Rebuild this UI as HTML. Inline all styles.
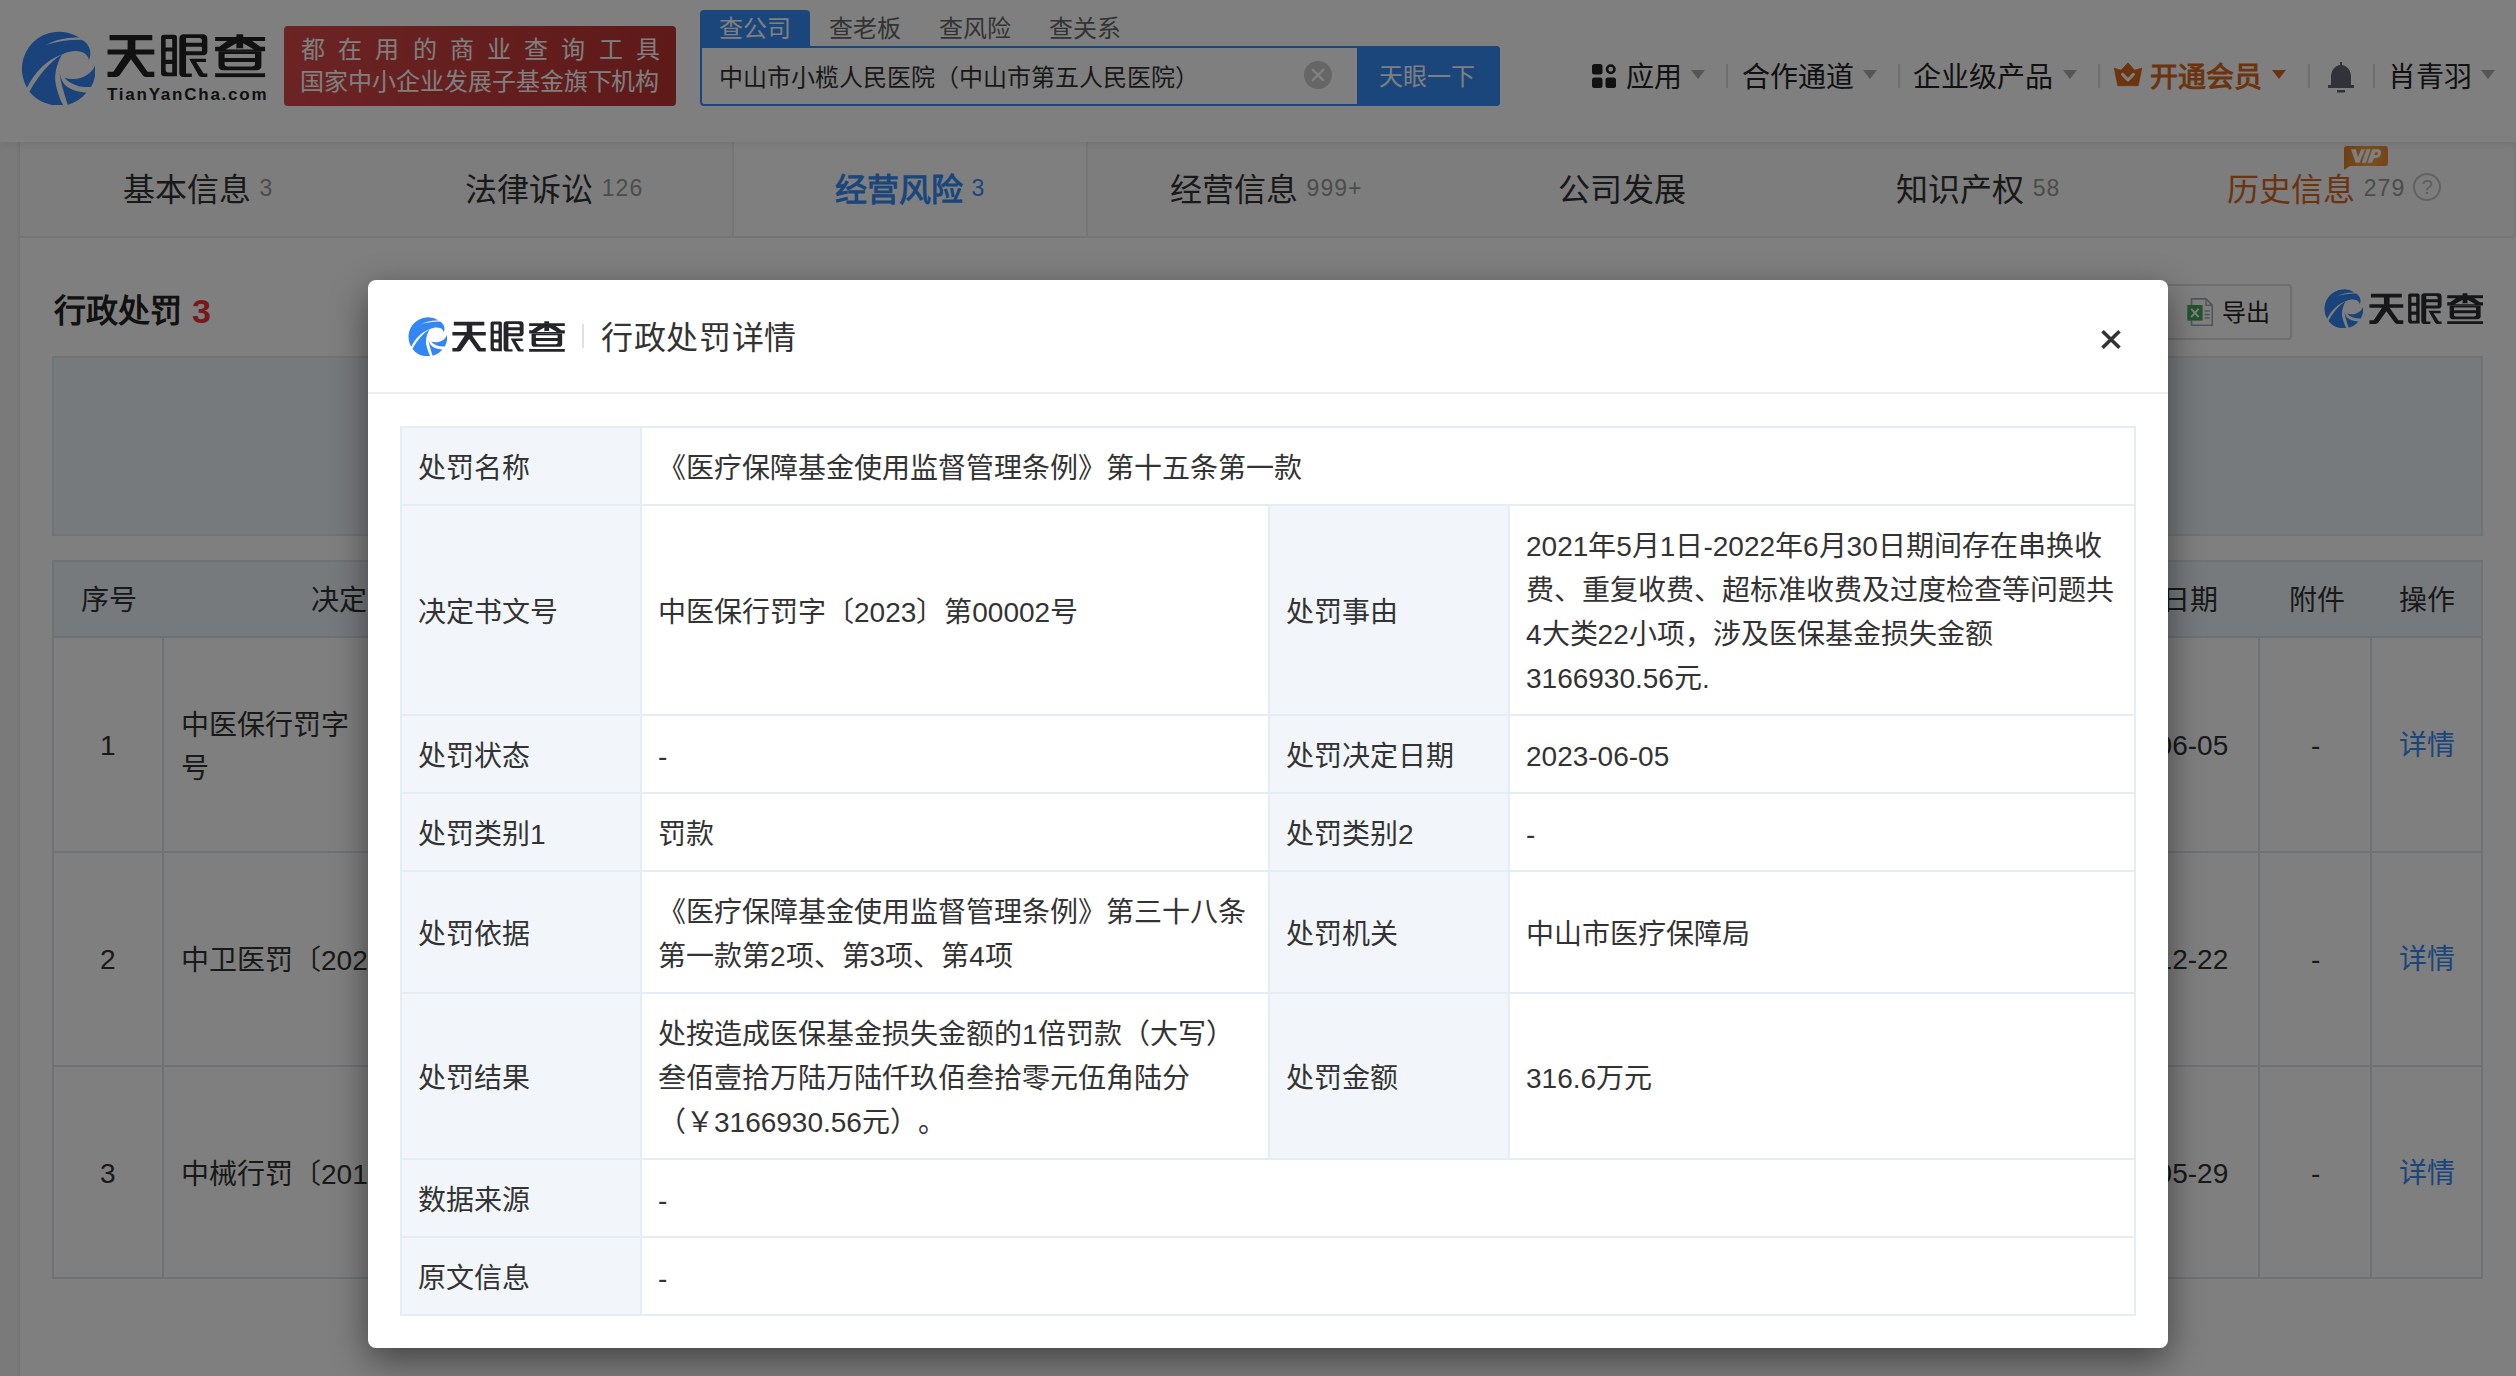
<!DOCTYPE html>
<html lang="zh-CN"><head><meta charset="utf-8">
<style>
*{box-sizing:border-box;margin:0;padding:0;text-spacing-trim:space-all}
html,body{width:2516px;height:1376px;overflow:hidden;background:#f5f5f5;font-family:"Liberation Sans",sans-serif;color:#333}
.a{position:absolute;white-space:nowrap}
#header{position:absolute;left:0;top:0;width:2516px;height:142px;background:#fff;box-shadow:0 3px 8px rgba(0,0,0,.07);z-index:2}
#card{position:absolute;left:20px;top:142px;width:2500px;height:1300px;background:#fff;box-shadow:-2px 0 3px rgba(0,0,0,.06)}
.lh{font-size:28px;line-height:44px;color:#333;margin-top:1.5px}
#tabs{position:absolute;left:20px;top:142px;width:2493px;height:96px;background:#fafafa;border-bottom:2px solid #ececec}
.tab{position:absolute;top:0;height:94px;padding-top:0.5px;line-height:94px;text-align:center;font-size:32px;color:#333;white-space:nowrap}
.tab small{font-size:23px;color:#999;margin-left:9px;position:relative;top:-4.5px;letter-spacing:1px}
#overlay{position:absolute;left:0;top:0;width:2516px;height:1376px;background:rgba(0,0,0,.5);z-index:10}
#modal{z-index:11;position:absolute;left:368px;top:280px;width:1800px;height:1068px;background:#fff;border-radius:8px;box-shadow:0 12px 36px rgba(0,0,0,.48)}
.nav{font-size:28px;color:#222;line-height:28px;top:64px}
.caret{position:absolute;top:70px;width:0;height:0;border-left:7px solid transparent;border-right:7px solid transparent;border-top:9px solid #aaa}
.sep{position:absolute;top:64px;width:2px;height:24px;background:#ddd}
table.dt{position:absolute;left:32px;top:146px;border-collapse:separate;border-spacing:0;table-layout:fixed;width:1736px;border-right:2px solid #e4ecf4;border-bottom:2px solid #e4ecf4}
table.dt td{border-left:2px solid #e4ecf4;border-top:2px solid #e4ecf4;padding:18.5px 16px 13.5px;font-size:28px;line-height:44px;color:#333;vertical-align:middle;white-space:nowrap}
table.dt td.l{background:#f2f6fa}
#list{position:absolute;left:33px;top:418px;border-collapse:separate;border-spacing:0;table-layout:fixed;width:2431px}
#list td,#list th{border-left:2px solid #e4ecf4;border-top:2px solid #e4ecf4;font-size:28px;color:#333;font-weight:normal;white-space:nowrap;overflow:hidden}
</style></head>
<body>
<svg width="0" height="0" style="position:absolute">
<defs>
<symbol id="tyc" viewBox="105 105 1190 1190">
<path fill="#3287f4" d="M1035,210 A595,595 0 0 0 200,1010 C330,760 520,560 760,480 C900,410 1080,400 1160,500 C1190,540 1195,580 1170,600 C1230,520 1230,380 1150,300 C1110,260 1080,240 1045,245 C850,245 680,270 500,330 C650,245 850,200 1035,210 Z"/>
<path fill="#3287f4" d="M240,1075 C380,820 560,600 760,480 C680,620 630,800 660,950 C690,1100 740,1220 780,1290 A595,595 0 0 1 240,1075 Z"/>
<path fill="#3287f4" d="M712,705 C728,890 790,1100 852,1282 A595,595 0 0 0 1150,1090 C1000,1080 880,1040 800,960 C755,905 722,820 712,705 Z"/>
<path fill="#3287f4" d="M1290,640 A595,595 0 0 1 1225,1000 C1050,1010 900,960 800,850 C900,880 1050,890 1170,800 C1240,750 1280,690 1290,640 Z"/>
</symbol>
<symbol id="logo" viewBox="100 95 2350 645">
<path fill="currentColor" d="M138,110 H770 V188 H520 V325 H800 V398 H520 L700,655 H800 V730 H680 C660,730 640,720 625,700 L455,470 L290,700 C275,720 250,730 225,730 H108 V655 H195 L365,398 H108 V325 H405 V188 H138 Z"/>
<path fill="currentColor" fill-rule="evenodd" d="M940,105 H1095 C1120,105 1135,120 1135,145 V720 H945 C920,720 900,700 900,675 V145 C900,120 915,105 940,105 Z M968,170 V295 H1065 V170 Z M968,355 V475 H1065 V355 Z M968,540 V625 C968,650 980,665 1005,665 H1065 V540 Z"/>
<path fill="currentColor" fill-rule="evenodd" d="M1230,100 H1525 C1560,100 1585,125 1585,160 V350 C1585,385 1560,410 1525,410 H1270 V680 H1355 V730 H1225 C1195,730 1170,705 1170,675 V160 C1170,125 1195,100 1230,100 Z M1270,155 V225 H1505 V195 C1505,170 1490,155 1465,155 Z M1270,285 V350 H1505 V285 Z"/>
<path fill="currentColor" d="M1315,460 H1565 V510 H1420 L1530,680 H1585 V730 H1500 C1480,730 1465,720 1455,705 Z"/>
<path fill="currentColor" fill-rule="evenodd" d="M1700,140 H2015 V100 H2115 V140 H2440 V200 H2250 L2370,285 H2440 V352 H1700 V285 H1760 L1880,200 H1700 Z M2015,232 L1855,325 H2015 Z M2115,232 V325 H2275 Z"/>
<path fill="#fff" d="M2015,305 H2115 V325 H2015 Z"/>
<path fill="currentColor" fill-rule="evenodd" d="M1750,352 H2385 V570 C2385,605 2360,630 2325,630 H1810 C1775,630 1750,605 1750,570 Z M1840,390 V450 H2290 V390 Z M1840,510 V540 C1840,565 1855,575 1880,575 H2250 C2275,575 2290,565 2290,540 V510 Z"/>
<path fill="currentColor" d="M1700,675 H2440 V735 H1700 Z"/>
</symbol>
</defs>
</svg>

<div id="header">
  <svg class="a" style="left:20.6px;top:30.5px" width="74.5" height="74.5"><use href="#tyc"/></svg>
  <svg class="a" style="left:106.8px;top:34.4px;color:#222" width="158.8" height="43.6"><use href="#logo"/></svg>
  <div class="a" style="left:107px;top:84.5px;font-size:17px;line-height:20px;font-weight:bold;color:#222;letter-spacing:1.76px">TianYanCha.com</div>
  <div class="a" style="left:284px;top:26px;width:392px;height:80px;border-radius:4px;background:linear-gradient(100deg,#d84848,#bc3232)"></div>
  <div class="a" style="left:301px;top:35px;font-size:24px;line-height:30px;color:#fff;letter-spacing:13.2px">都在用的商业查询工具</div>
  <div class="a" style="left:300px;top:67px;font-size:24px;line-height:30px;color:#fff;letter-spacing:-0.04px">国家中小企业发展子基金旗下机构</div>

  <div class="a" style="left:700px;top:10px;width:110px;height:37px;background:#368cf8;border-radius:4px 4px 0 0"></div>
  <div class="a" style="left:719px;top:14px;font-size:24px;line-height:30px;color:#fff">查公司</div>
  <div class="a" style="left:829px;top:14px;font-size:24px;line-height:30px;color:#666">查老板</div>
  <div class="a" style="left:939px;top:14px;font-size:24px;line-height:30px;color:#666">查风险</div>
  <div class="a" style="left:1049px;top:14px;font-size:24px;line-height:30px;color:#666">查关系</div>
  <div class="a" style="left:700px;top:46px;width:800px;height:60px;border:2px solid #368cf8;border-radius:0 4px 4px 4px;background:#fff"></div>
  <div class="a" style="left:718.5px;top:62.5px;font-size:24px;line-height:30px;color:#333">中山市小榄人民医院（中山市第五人民医院）</div>
  <div class="a" style="left:1304px;top:60.5px;width:28px;height:28px;border-radius:50%;background:#cccccc"></div>
  <svg class="a" style="left:1304px;top:60.5px" width="28" height="28"><path d="M8.8,8.8 L19.2,19.2 M19.2,8.8 L8.8,19.2" stroke="#fff" stroke-width="2.5" stroke-linecap="round"/></svg>
  <div class="a" style="left:1357px;top:46px;width:143px;height:60px;background:#368cf8;border-radius:0 4px 4px 0"></div>
  <div class="a" style="left:1379px;top:62px;font-size:24px;line-height:30px;color:#fff">天眼一下</div>

  <svg class="a" style="left:1592px;top:64px" width="24" height="24"><rect x="0" y="0" width="10.5" height="10.5" rx="2.5" fill="#222"/><circle cx="18.75" cy="5.25" r="3.7" fill="none" stroke="#222" stroke-width="2.6"/><rect x="0" y="13.5" width="10.5" height="10.5" rx="2.5" fill="#222"/><rect x="13.5" y="13.5" width="10.5" height="10.5" rx="2.5" fill="#222"/></svg>
  <div class="a nav" style="left:1626px">应用</div>
  <div class="caret" style="left:1691px"></div>
  <div class="sep" style="left:1726px"></div>
  <div class="a nav" style="left:1742px">合作通道</div>
  <div class="caret" style="left:1863px"></div>
  <div class="sep" style="left:1898px"></div>
  <div class="a nav" style="left:1913px">企业级产品</div>
  <div class="caret" style="left:2063px"></div>
  <div class="sep" style="left:2098px"></div>
  <svg class="a" style="left:2114px;top:62px" width="28" height="25"><path d="M0.3,6.2 L7,8.3 L14,0.9 L20.7,8.3 L27.7,6.2 L24.2,23.7 L3.8,23.7 Z" fill="#d6691f" stroke="#d6691f" stroke-width="0.8" stroke-linejoin="round"/><path d="M8.6,12.4 L14,18 L19.4,12.4" fill="none" stroke="#fff" stroke-width="3" stroke-linecap="round" stroke-linejoin="round"/></svg>
  <div class="a nav" style="left:2150px;font-weight:bold;color:#d6691f">开通会员</div>
  <div class="caret" style="left:2272px;border-top-color:#d6691f"></div>
  <div class="sep" style="left:2308px"></div>
  <svg class="a" style="left:2327px;top:62px" width="28" height="32"><path d="M13,0 h2 v3 C21,4 24,9 24,15 V23 H27 V26 H1 V23 H4 V15 C4,9 7,4 13,3 Z" fill="#606874"/><rect x="10" y="28" width="8" height="2.5" fill="#606874"/></svg>
  <div class="sep" style="left:2373px"></div>
  <div class="a nav" style="left:2388px">肖青羽</div>
  <div class="caret" style="left:2481px"></div>
</div>

<div id="card"></div>
<div class="a" style="left:2513px;top:142px;width:3px;height:96px;background:#f2f2f2"></div>
<div id="tabs">
    <div class="tab" style="left:0;width:356px">基本信息<small>3</small></div>
    <div class="tab" style="left:356px;width:356px">法律诉讼<small>126</small></div>
    <div class="tab" style="left:712px;width:356px;background:#fff;border-left:2px solid #ececec;border-right:2px solid #ececec;color:#368cf8;font-weight:bold">经营风险<small style="color:#368cf8;font-weight:normal">3</small></div>
    <div class="tab" style="left:1068px;width:356px">经营信息<small>999+</small></div>
    <div class="tab" style="left:1424px;width:356px">公司发展</div>
    <div class="tab" style="left:1780px;width:356px">知识产权<small>58</small></div>
    <div class="tab" style="left:2136px;width:356px;color:#d6691f">历史信息<small>279</small><span style="display:inline-block;width:28px;height:28px;border:2px solid #c4c4c4;border-radius:50%;margin-left:8px;vertical-align:middle;font-size:20px;line-height:24px;color:#bbb;text-align:center;position:relative;top:-5px">?</span></div>
</div>
<svg class="a" style="left:2344px;top:146px" width="46" height="26"><defs><linearGradient id="vg" x1="0" x2="1" y1="0" y2="0"><stop offset="0" stop-color="#dc7e2a"/><stop offset="0.5" stop-color="#f2a446"/><stop offset="1" stop-color="#ec8a32"/></linearGradient></defs><path d="M3,0 H41 Q44,0 44,3 V17 Q44,20 41,20 H6 L0,24 V3 Q0,0 3,0 Z" fill="url(#vg)"/><path fill="#fff" d="M7,3.2 H11.9 L14,10.9 L17.3,3.2 H21 L15.4,16.7 H11.7 Z M22.6,3.2 H26.6 L21.9,16.7 H18 Z M28.4,3.2 H33.5 C37,3.2 37.5,5.8 36.8,8.1 C35.9,11.8 33.5,12.3 29.8,12.3 L28,16.7 H23.5 Z M31.2,6.2 L30.3,9 H33.1 C34,8.1 34,6.2 33.1,6.2 Z" fill-rule="evenodd"/></svg>

<div class="a" style="left:54px;top:290.5px;font-size:32px;line-height:40px;font-weight:bold;color:#222">行政处罚</div>
<div class="a" style="left:192px;top:290.5px;font-size:34px;line-height:40px;font-weight:bold;color:#e33">3</div>
<div class="a" style="left:2120px;top:284px;width:172px;height:56px;border:2px solid #ddd;border-radius:4px"></div>
<svg class="a" style="left:2186px;top:297px" width="28" height="30"><path d="M5.5,1.9 H20 L26.2,8.2 V28.3 H5.5 Z" fill="#fff" stroke="#a2a9b4" stroke-width="1.6"/><path d="M20,1.9 V8.2 H26.2" fill="none" stroke="#a2a9b4" stroke-width="1.4"/><rect x="1.3" y="8" width="15.3" height="15.6" fill="#46a85c"/><path d="M5.2,11.8 L12.6,20 M12.6,11.8 L5.2,20" stroke="#fff" stroke-width="1.9"/><path d="M18.5,14 H23.8 M18.5,17.5 H23.8 M18.5,21 H23.8" stroke="#a2a9b4" stroke-width="1.3"/></svg>
<div class="a" style="left:2221.5px;top:297.5px;font-size:24px;line-height:30px;color:#222">导出</div>
<svg class="a" style="left:2323.9px;top:288.7px" width="39.2" height="39.2"><use href="#tyc"/></svg>
<svg class="a" style="left:2368.6px;top:292.8px;color:#2a2c30" width="114.9" height="31.5"><use href="#logo"/></svg>
<div class="a" style="left:52px;top:356px;width:2431px;height:180px;background:#eef4fb;border:2px solid #e0e8f0"></div>

<div class="a" style="left:52px;top:560px;width:2431px;height:77px;background:#eef4fb;border:2px solid #dfe7ef;border-bottom:0"></div>
<div class="a lh" style="left:81px;top:577px">序号</div>
<div class="a lh" style="left:311px;top:577px">决定书文号</div>
<div class="a lh" style="left:2106px;top:577px">处罚日期</div>
<div class="a lh" style="left:2289px;top:577px">附件</div>
<div class="a lh" style="left:2399px;top:577px">操作</div>
<div class="a" style="left:52px;top:636px;width:2px;height:643px;background:#dfe5eb"></div>
<div class="a" style="left:2481px;top:636px;width:2px;height:643px;background:#dfe5eb"></div>
<div class="a" style="left:52px;top:636px;width:2431px;height:2px;background:#dfe5eb"></div>
<div class="a" style="left:52px;top:851px;width:2431px;height:2px;background:#dfe5eb"></div>
<div class="a" style="left:52px;top:1065px;width:2431px;height:2px;background:#dfe5eb"></div>
<div class="a" style="left:52px;top:1277px;width:2431px;height:2px;background:#dfe5eb"></div>
<div class="a" style="left:162px;top:637px;width:2px;height:642px;background:#dfe5eb"></div>
<div class="a" style="left:2258px;top:637px;width:2px;height:642px;background:#dfe5eb"></div>
<div class="a" style="left:2370px;top:637px;width:2px;height:642px;background:#dfe5eb"></div>
<div class="a lh" style="left:100px;top:722px">1</div>
<div class="a lh" style="left:100px;top:936px">2</div>
<div class="a lh" style="left:100px;top:1150px">3</div>
<div class="a lh" style="left:181px;top:702px;line-height:43px">中医保行罚字〔2023〕第00002<br>号</div>
<div class="a lh" style="left:181px;top:937px">中卫医罚〔2020〕</div>
<div class="a lh" style="left:181px;top:1151px">中械行罚〔2019〕</div>
<div class="a lh" style="left:2085px;top:722px">2023-06-05</div>
<div class="a lh" style="left:2085px;top:936px">2020-12-22</div>
<div class="a lh" style="left:2085px;top:1150px">2019-05-29</div>
<div class="a lh" style="left:2311px;top:722px">-</div>
<div class="a lh" style="left:2311px;top:936px">-</div>
<div class="a lh" style="left:2311px;top:1150px">-</div>
<div class="a lh" style="left:2399px;top:722px;color:#368cf8">详情</div>
<div class="a lh" style="left:2399px;top:936px;color:#368cf8">详情</div>
<div class="a lh" style="left:2399px;top:1150px;color:#368cf8">详情</div>

<div id="overlay"></div>
<div id="modal">
  <svg class="a" style="left:39.5px;top:36.7px" width="39.2" height="39.2"><use href="#tyc"/></svg>
  <svg class="a" style="left:84.2px;top:40.8px;color:#23252a" width="113.3" height="31.1"><use href="#logo"/></svg>
  <div class="a" style="left:214px;top:44px;width:2px;height:24px;background:#dde1e6"></div>
  <div class="a" style="left:233px;top:38px;font-size:32px;line-height:40px;color:#333;letter-spacing:0.7px;font-weight:500">行政处罚详情</div>
  <svg class="a" style="left:1731px;top:48px" width="24" height="24"><path d="M3.5,3.2 L20.5,19.8 M20.5,3.2 L3.5,19.8" stroke="#333" stroke-width="3.6"/></svg>
  <div class="a" style="left:0;top:112px;width:1800px;height:2px;background:#eee"></div>
  <table class="dt">
    <colgroup><col style="width:240px"><col style="width:628px"><col style="width:240px"><col style="width:626px"></colgroup>
    <tr><td class="l">处罚名称</td><td colspan="3">《医疗保障基金使用监督管理条例》第十五条第一款</td></tr>
    <tr><td class="l">决定书文号</td><td>中医保行罚字〔2023〕第00002号</td><td class="l">处罚事由</td><td>2021年5月1日-2022年6月30日期间存在串换收<br>费、重复收费、超标准收费及过度检查等问题共<br>4大类22小项，涉及医保基金损失金额<br>3166930.56元.</td></tr>
    <tr><td class="l">处罚状态</td><td>-</td><td class="l">处罚决定日期</td><td>2023-06-05</td></tr>
    <tr><td class="l">处罚类别1</td><td>罚款</td><td class="l">处罚类别2</td><td>-</td></tr>
    <tr><td class="l">处罚依据</td><td>《医疗保障基金使用监督管理条例》第三十八条<br>第一款第2项、第3项、第4项</td><td class="l">处罚机关</td><td>中山市医疗保障局</td></tr>
    <tr><td class="l">处罚结果</td><td>处按造成医保基金损失金额的1倍罚款（大写）<br>叁佰壹拾万陆万陆仟玖佰叁拾零元伍角陆分<br>（￥3166930.56元）。</td><td class="l">处罚金额</td><td>316.6万元</td></tr>
    <tr><td class="l">数据来源</td><td colspan="3">-</td></tr>
    <tr><td class="l">原文信息</td><td colspan="3">-</td></tr>
  </table>
</div>
</body></html>
